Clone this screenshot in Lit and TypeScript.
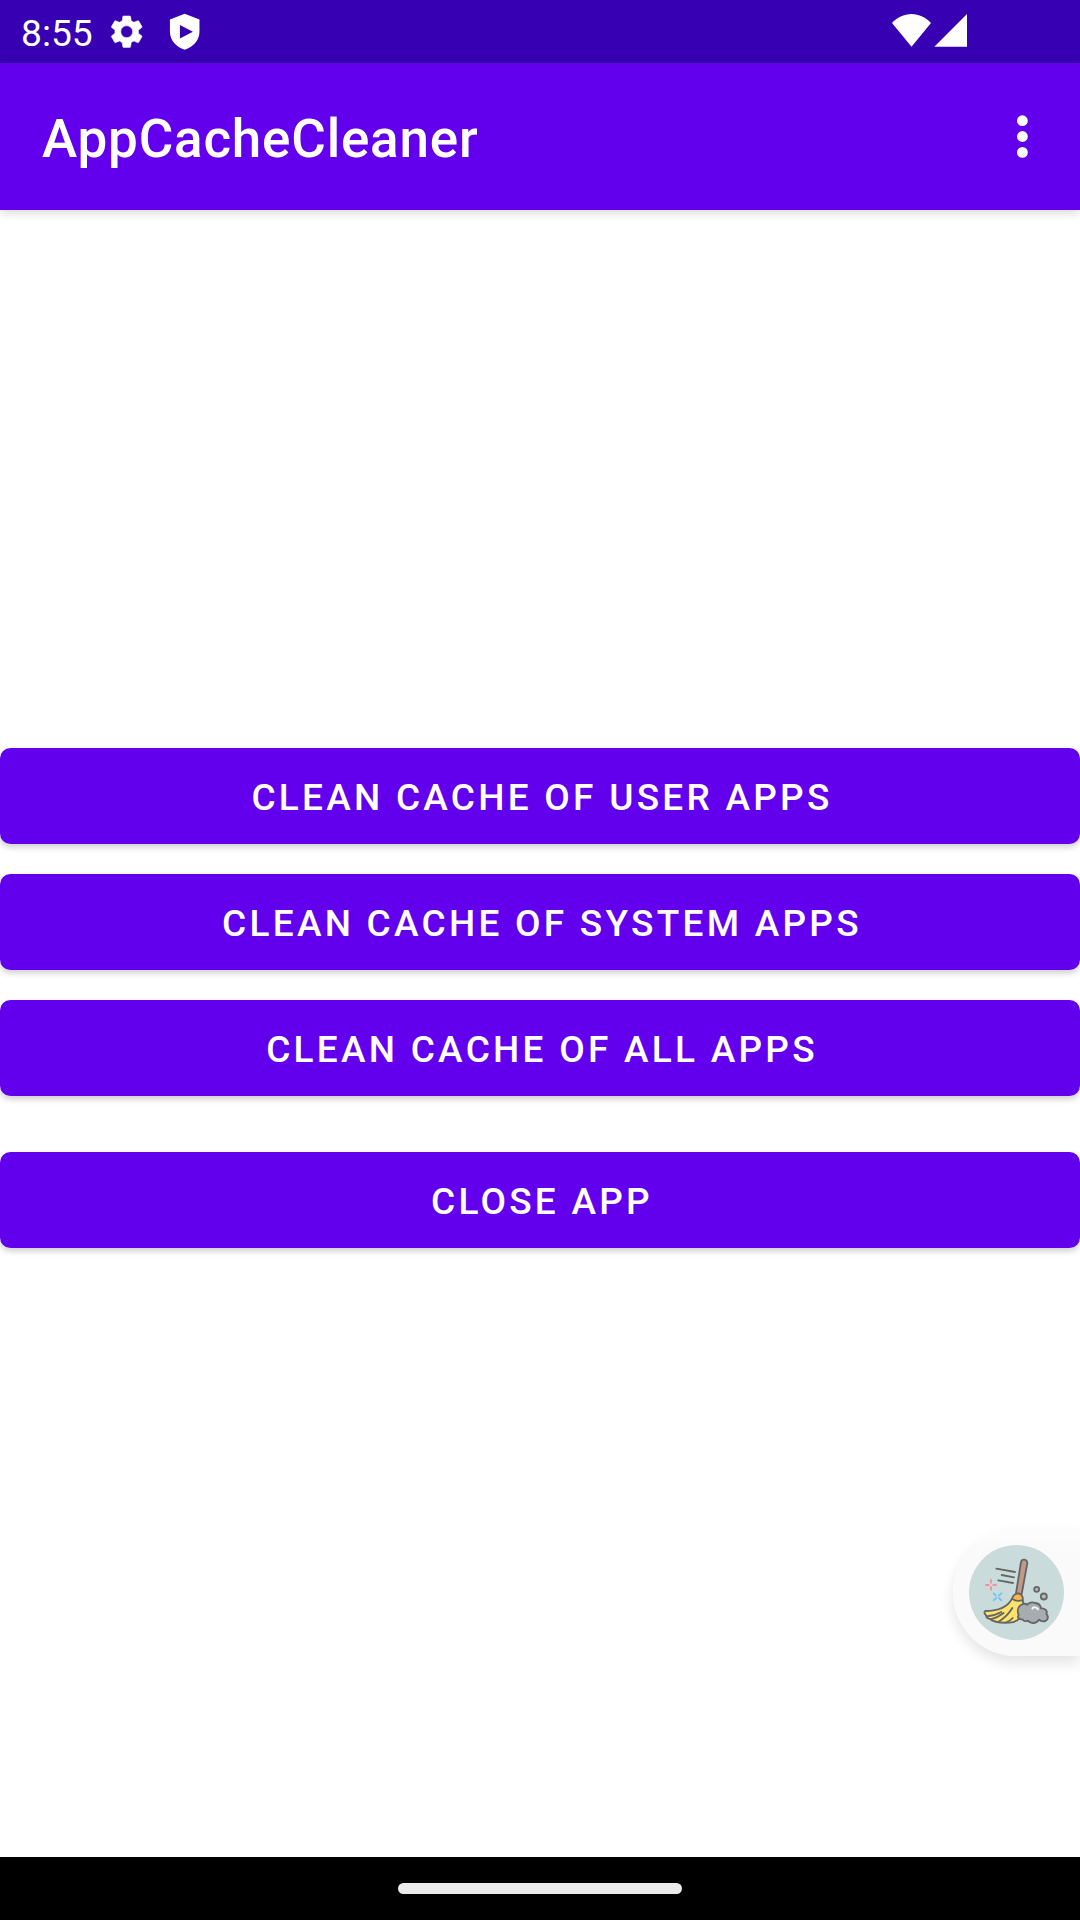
import { LitElement, html, css, svg } from "lit";
import { customElement, property } from "lit/decorators.js";

@customElement("status-bar")
class StatusBar extends LitElement {
  @property() time = "8:55";

  static styles = css`
    :host {
      display: flex;
      align-items: flex-start;
      height: 63px;
      box-sizing: border-box;
      padding: 12px 113px 0 21px;
      background: #3700b3;
      color: #fff;
    }
    .time {
      width: 86px;
      font-size: 37.2px;
      line-height: 43px;
    }
    .gear {
      width: 39.4px;
      height: 39.4px;
      margin-right: 19.1px;
      stroke: #fff;
      stroke-width: 0.3;
    }
    .shield {
      width: 39.4px;
      height: 39.4px;
    }
    .spacer {
      flex: 1;
    }
    .signals {
      width: 75px;
      height: 33px;
      margin-top: 2px;
    }
    svg {
      display: block;
      fill: #fff;
    }
  `;

  render() {
    return html`
      <div class="time">${this.time}</div>
      <svg class="gear" viewBox="0 0 24 24">
        <path
          d="M19.14 12.94c.04-.3.06-.61.06-.94 0-.32-.02-.64-.07-.94l2.03-1.58c.18-.14.23-.41.12-.61l-1.92-3.32c-.12-.22-.37-.29-.59-.22l-2.39.96c-.5-.38-1.03-.7-1.62-.94l-.36-2.54c-.04-.24-.24-.41-.48-.41h-3.84c-.24 0-.43.17-.47.41l-.36 2.54c-.59.24-1.13.57-1.62.94l-2.39-.96c-.22-.08-.47 0-.59.22L2.74 8.87c-.12.21-.08.47.12.61l2.03 1.58c-.05.3-.09.63-.09.94s.02.64.07.94l-2.03 1.58c-.18.14-.23.41-.12.61l1.92 3.32c.12.22.37.29.59.22l2.39-.96c.5.38 1.03.7 1.62.94l.36 2.54c.05.24.24.41.48.41h3.84c.24 0 .44-.17.47-.41l.36-2.54c.59-.24 1.13-.56 1.62-.94l2.39.96c.22.08.47 0 .59-.22l1.92-3.32c.12-.22.07-.47-.12-.61l-2.01-1.58zM12 15.6c-1.98 0-3.6-1.62-3.6-3.6s1.62-3.6 3.6-3.6 3.6 1.62 3.6 3.6-1.62 3.6-3.6 3.6z"
        />
      </svg>
      <svg class="shield" viewBox="0 0 24 24">
        <path
          fill-rule="evenodd"
          d="M12 1L3 4.6v7.3c0 5.3 3.8 9.5 9 11.1 5.2-1.6 9-5.8 9-11.1V4.6zM9.1 7.9v8.2l7.9-4.1z"
        />
      </svg>
      <div class="spacer"></div>
      <svg class="signals" viewBox="0 0 75 33">
        <path d="M19.5 32.7L0 9C5 3.5 12 0 19.5 0S34 3.5 39 9zM75 0v32.7H42.3z" />
      </svg>
    `;
  }
}

@customElement("title-bar")
class TitleBar extends LitElement {
  @property() heading = "";

  static styles = css`
    :host {
      display: flex;
      align-items: center;
      justify-content: space-between;
      height: 147px;
      box-sizing: border-box;
      padding: 0 47px 0 42px;
      background: #6200ee;
      color: #fff;
      box-shadow: 0 2px 10px rgba(0, 0, 0, 0.18);
    }
    .heading {
      margin: 0;
      padding-top: 5px;
      font-size: 53px;
      font-weight: 500;
      line-height: 62px;
      letter-spacing: 0.79px;
      white-space: nowrap;
    }
    .more {
      display: block;
      width: 21px;
      height: 63px;
      fill: #fff;
    }
  `;

  render() {
    return html`
      <h1 class="heading">${this.heading}</h1>
      <svg class="more" viewBox="0 0 21 63">
        ${[15.7, 31.5, 47.4].map((y) => svg`<circle cx="10.4" cy=${y} r="5.4" />`)}
      </svg>
    `;
  }
}

@customElement("broom-bubble")
class BroomBubble extends LitElement {
  static styles = css`
    :host {
      display: flex;
      align-items: center;
      box-sizing: border-box;
      width: 127px;
      height: 127px;
      padding-left: 16px;
      border-radius: 63.5px 0 0 63.5px;
      background: linear-gradient(#fdfdfd, #fafafa 20px);
      box-shadow: 0 7px 14px rgba(0, 0, 0, 0.11);
    }
    svg {
      display: block;
      width: 95px;
      height: 95px;
    }
  `;

  render() {
    return html`
      <svg viewBox="27 15 285 285" fill="none" stroke="#666" stroke-width="5.5" stroke-linecap="round" stroke-linejoin="round">
        <circle cx="169.5" cy="157.5" r="142.5" fill="#c9dbda" stroke="none" />
        <path d="M109 86L165 96M125 105L162 112M115 121L159 129" />
        <g stroke="#f78f9b">
          <path d="M93 120v8M93 141v8M78 135h8M100 135h8" />
        </g>
        <g stroke="#6fc4f7">
          <path d="M101 160l7 7M117 174l7 7M124 160l-7 7M108 174l-7 7" />
        </g>
        <path d="M183 66Q185 58 193 59T202 69L185 162L168 160Z" fill="#c49a86" />
        <path
          d="M156 176C145 198 119 213 76 213C70 217 75 222 80 229C78 232 84 237 91 237C99 245 118 249 145 248Q159 249 172 241C188 224 194 205 188 181Z"
          fill="#ffe36b"
        />
        <path d="M80 229Q102 228 124 216M92 238Q115 232 131 219M116 245Q143 228 157 204M139 247Q151 242 158 234" />
        <path d="M156 176C160 164 169 160 176 161C185 162 190 172 188 180Q171 187 156 176Z" fill="#fdb44b" />
        <path
          d="M187 238C177 240 171 231 176 224C172 216 172 204 180 197C187 190 197 190 202 194C207 187 218 186 225 189C236 190 242 197 243 205C255 204 264 213 259 222C268 231 263 244 249 244C242 244 239 241 237 239C232 246 226 250 218 249C211 249 207 246 204 242C198 245 190 243 187 238Z"
          fill="#a6acb0"
        />
        <path d="M217 206C219 200 231 201 234 208" stroke="#f4f6f7" stroke-width="6" />
        <circle cx="230" cy="148" r="7.5" fill="#b4bcbe" />
        <circle cx="251.5" cy="169.5" r="9" fill="#b4bcbe" />
      </svg>
    `;
  }
}

@customElement("app-root")
class AppRoot extends LitElement {
  private cleanActions = ["Clean cache of user apps", "Clean cache of system apps", "Clean cache of all apps"];

  static styles = css`
    :host {
      display: flex;
      flex-direction: column;
      position: relative;
      width: 1080px;
      height: 1920px;
      overflow: hidden;
      background: #fff;
      font-family: Roboto, sans-serif;
    }
    .content {
      flex: 1;
      display: flex;
      flex-direction: column;
      padding-top: 538px;
    }
    .actions {
      display: flex;
      flex-direction: column;
      gap: 30px;
      margin-bottom: 56px;
    }
    .action {
      display: block;
      box-sizing: border-box;
      width: 100%;
      height: 96px;
      padding: 2px 0 0 4px;
      border: 0;
      border-radius: 10.5px;
      background: #6200ee;
      color: #fff;
      font: 500 37px/43px Roboto, sans-serif;
      letter-spacing: 3.25px;
      text-transform: uppercase;
      box-shadow: 0 3px 6px rgba(0, 0, 0, 0.2);
    }
    .bubble {
      position: absolute;
      right: 0;
      top: 1529px;
    }
    .nav {
      display: flex;
      align-items: center;
      justify-content: center;
      height: 63px;
      background: #000;
    }
    .pill {
      width: 284px;
      height: 11px;
      border-radius: 5.5px;
      background: #ebebeb;
    }
  `;

  render() {
    return html`
      <status-bar></status-bar>
      <title-bar heading="AppCacheCleaner"></title-bar>
      <main class="content">
        <div class="actions">
          ${this.cleanActions.map((label) => html`<button class="action">${label}</button>`)}
        </div>
        <button class="action">Close app</button>
      </main>
      <broom-bubble class="bubble"></broom-bubble>
      <footer class="nav"><div class="pill"></div></footer>
    `;
  }
}
